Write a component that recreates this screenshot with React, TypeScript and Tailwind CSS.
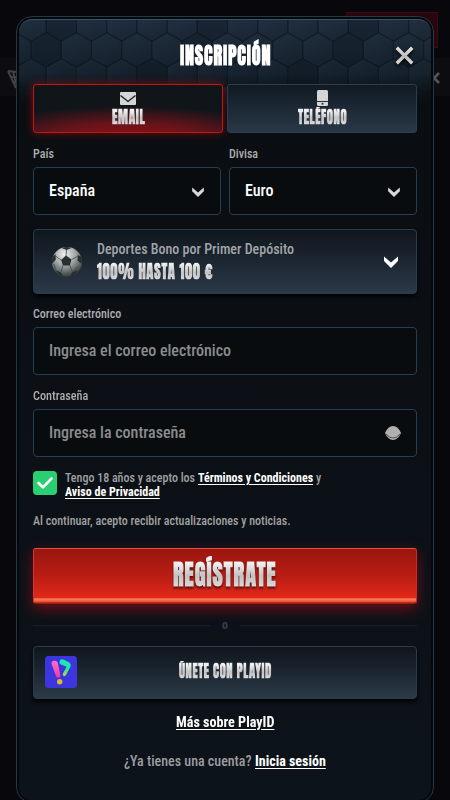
import { useLayoutEffect, useRef, useState } from 'react';
import type { ReactNode } from 'react';

const body = 'font-["Roboto_Condensed","Roboto",sans-serif] [font-stretch:75%] font-medium';
const display = 'font-["Anton","Roboto",sans-serif] [font-stretch:75%] font-black tracking-[0.045em]';
const metal = 'bg-linear-to-b from-[#f0f0f0] from-20% via-[#c2c2c2] via-55% to-[#dadada] to-85% bg-clip-text text-transparent';
const panel =
  'border border-[#2a3c4a] bg-linear-to-b from-[#0f161d] to-[#2b3948] shadow-[0_3px_4px_#020406]';

/** Single line of text condensed horizontally to the given width. */
function Fit({ w, className = '', children }: { w: number; className?: string; children: ReactNode }) {
  const ref = useRef<HTMLSpanElement>(null);
  const [scale, setScale] = useState(1);
  useLayoutEffect(() => {
    if (ref.current) setScale(w / ref.current.offsetWidth);
  }, [w]);
  return (
    <span className="inline-block align-top whitespace-nowrap" style={{ width: w }}>
      <span ref={ref} className={`inline-block origin-left align-top ${className}`} style={{ transform: `scaleX(${scale})` }}>
        {children}
      </span>
    </span>
  );
}

function Chevron({ className = '' }: { className?: string }) {
  return (
    <svg viewBox="0 0 14 12" className={className} fill="currentColor">
      <path d="M0 .5 L7 6.5 L14 .5 V5 L7 12 L0 5Z" />
    </svg>
  );
}

const hexes: [number, number][] = [];
for (let r = 0; r < 4; r++) for (let c = 0; c < 16; c++) hexes.push([(r % 2 ? 26 : 11) + c * 30.2 - 30, 6 + r * 26]);

function HexBackdrop() {
  return (
    <svg className="absolute inset-x-0 top-0 h-[92px] w-full" viewBox="0 0 412 92" preserveAspectRatio="none">
      <defs>
        <linearGradient id="hexBase" x1="0" y1="0" x2="0" y2="1">
          <stop offset="0" stopColor="#1f2e3e" />
          <stop offset="0.65" stopColor="#141f2a" />
          <stop offset="1" stopColor="#0a0f14" />
        </linearGradient>
        <linearGradient id="hexFace" x1="0" y1="0" x2="1" y2="1">
          <stop offset="0" stopColor="#32485c" stopOpacity="0.14" />
          <stop offset="1" stopColor="#05090d" stopOpacity="0.12" />
        </linearGradient>
        <linearGradient id="hexFade" x1="0" y1="0" x2="0" y2="1">
          <stop offset="0.6" stopColor="#0a0d11" stopOpacity="0" />
          <stop offset="1" stopColor="#0a0d11" />
        </linearGradient>
      </defs>
      <rect width="412" height="92" fill="url(#hexBase)" />
      {hexes.map(([x, y], i) => (
        <g key={i} transform={`translate(${x + 1} ${y - 1})`}>
          <path d="M0 -17 L15 -8.5 V8.5 L0 17 L-15 8.5 V-8.5Z" fill={i % 5 === 2 ? '#0b151e55' : 'url(#hexFace)'} stroke="#0b131b" strokeWidth="1.2" strokeOpacity="0.4" />
          <path d="M-14 8 V-8 L0 -16 L14 -8" fill="none" stroke="#40586c" strokeWidth="0.6" strokeOpacity="0.14" />
        </g>
      ))}
      <rect width="412" height="92" fill="url(#hexFade)" />
    </svg>
  );
}

function Football() {
  return (
    <svg viewBox="0 0 32 32" className="h-8 w-8">
      <defs>
        <radialGradient id="ball" cx="0.42" cy="0.25" r="0.8">
          <stop offset="0" stopColor="#f2f2f2" />
          <stop offset="0.45" stopColor="#a2a6a6" />
          <stop offset="1" stopColor="#272d2e" />
        </radialGradient>
      </defs>
      <circle cx="16" cy="16" r="15" fill="url(#ball)" />
      <g fill="#26302f">
        <path d="M15 9.5 L20.5 13.5 L18.8 19.5 H12 L10 14Z" />
        <path d="M10.5 2 Q16 0 20.5 2 L15.5 4Z" />
        <path d="M1.6 11 L4.5 8 L4.8 13.5 L1 18 Q.6 14 1.6 11Z" />
        <path d="M30.4 11 L27 9 L26.5 14.5 L30.5 18 Q31.4 14 30.4 11Z" />
        <path d="M4.5 24 L10 26.5 L12 30.5 Q7 28.5 4.5 24Z" />
        <path d="M27 24 L21 26.5 L19.5 30.7 Q25 29 27 24Z" />
      </g>
      <path d="M15 10 L15.5 4 M20.5 13.5 L27 10 M18.8 19.5 L21.5 26 M12 19.5 L9.8 26 M10 14 L4.5 10 M21.5 26 L27.5 20 M4.5 24 L3 18" stroke="#3d4646" strokeWidth="0.8" />
    </svg>
  );
}

function PlayIdLogo() {
  return (
    <svg viewBox="0 0 32 32" className="h-8 w-8 shrink-0">
      <defs>
        <linearGradient id="pink" x1="0" y1="0" x2="0" y2="1">
          <stop offset="0" stopColor="#ff70cf" />
          <stop offset="1" stopColor="#f5359f" />
        </linearGradient>
        <linearGradient id="green" x1="0" y1="0" x2="0" y2="1">
          <stop offset="0" stopColor="#13e7c6" />
          <stop offset="0.55" stopColor="#2be69b" />
          <stop offset="1" stopColor="#b5e02f" />
        </linearGradient>
      </defs>
      <rect width="32" height="32" rx="3.5" fill="#3d36df" />
      <path d="M6.7 8.2 Q6 5 9 4.7 Q12.3 4.3 13 7.5 L15.3 19.5 Q15.4 21.4 13.5 21.8 Q11.7 22 11 20Z" fill="url(#pink)" />
      <path d="M14.5 5.5 Q15.2 2.6 18.5 3.6 L24 6.3 Q26.5 8 25.3 11 L21 19 Q19.8 20.8 18.4 19.8 Q17.3 19 18 17.5 L21.6 10.7 L16 8.5 Q14 7.3 14.5 5.5Z" fill="url(#green)" />
      <circle cx="14.7" cy="25.7" r="2.7" fill="#e4b928" />
    </svg>
  );
}

function Select({ label, lw, value, vw }: { label: string; lw: number; value: string; vw: number }) {
  return (
    <div className="flex-1">
      <div className="h-[20px] text-[12px] leading-[14px] text-[#acadae]">
        <Fit w={lw}>{label}</Fit>
      </div>
      <div className="flex h-12 items-center justify-between rounded-[4px] border border-[#293d52] bg-[#090c0f] pr-[16px] pl-[15px] text-[16px] leading-5 text-white">
        <Fit w={vw}>{value}</Fit>
        <Chevron className="mt-[2px] h-[10px] w-3 text-[#d8d8d8]" />
      </div>
    </div>
  );
}

function Field({ label, lw, hint, hw, children }: { label: string; lw: number; hint: string; hw: number; children?: ReactNode }) {
  return (
    <div className="h-[68px]">
      <div className="h-[20px] text-[12px] leading-[14px] text-[#acadae]">
        <Fit w={lw}>{label}</Fit>
      </div>
      <div className="flex h-12 items-center justify-between rounded-[4px] border border-[#293d52] bg-[#090c0f] px-[15px] text-[16px] leading-5 text-[#8b8c8d]">
        <Fit w={hw}>{hint}</Fit>
        {children}
      </div>
    </div>
  );
}

export default function App() {
  return (
    <div className={`relative h-[800px] w-[450px] overflow-hidden bg-[#08080c] ${body}`}>
      <div className="absolute top-3 left-[346px] h-9 w-[92px] border border-[#3d0a12] bg-[#25070d]" />
      <div className="absolute top-[58px] left-0 h-[38px] w-full bg-[#0c0c11]" />
      <svg className="absolute top-[69px] left-[7px] h-[20px] w-[12px]" viewBox="0 0 12 20" fill="none" stroke="#424246" strokeWidth="2">
        <path d="M1 2 L10 3 M1 2 L9 19 M3 8 H10 M6 13 H10 M6 2 L9 15" />
      </svg>
      <svg className="absolute top-[72px] left-[431px] h-[12px] w-[9px]" viewBox="0 0 9 12" fill="none" stroke="#55555b" strokeWidth="2.6">
        <path d="M8 1 L3 6 L8 11" />
      </svg>

      <main className="absolute top-4 left-4 h-[787px] w-[418px] rounded-[16px] border border-[#263746] bg-[#05080b] p-[2px]">
        <div className="relative h-full overflow-hidden rounded-[13px] bg-linear-to-b from-[#0a0d11] to-[#0d131a]">
          <HexBackdrop />
          <div className="absolute inset-0 rounded-[13px] border-t border-[#38536a]" />
          <div className="relative px-[14px]">
            <header className="flex h-[65px] items-center justify-between pt-[9px] pr-[3px] pl-[147px]">
              <h1 className={`text-[23px] leading-7 text-white ${display}`}>
                <Fit w={91}>INSCRIPCIÓN</Fit>
              </h1>
              <svg viewBox="0 0 19 19" className="-mt-[1px] h-[19px] w-[19px] drop-shadow-[0_2px_2px_#000]" fill="none" strokeWidth="3.4">
                <defs>
                  <linearGradient id="cross" x1="0" y1="0" x2="0" y2="19" gradientUnits="userSpaceOnUse">
                    <stop stopColor="#eee" />
                    <stop offset="0.55" stopColor="#bababa" />
                    <stop offset="1" stopColor="#e3e3e3" />
                  </linearGradient>
                </defs>
                <path d="M1.8 1.8 L17.2 17.2 M17.2 1.8 L1.8 17.2" stroke="url(#cross)" />
              </svg>
            </header>

            <div className="flex h-[49px] gap-1">
              <button className="flex flex-1 flex-col items-center rounded-[3px] border border-[#b91b14] bg-[radial-gradient(ellipse_85%_70%_at_50%_115%,#981016_0%,#66131a_50%,#10151a_100%)] pt-[7px] shadow-[0_0_9px_#b30a12aa]">
                <svg viewBox="0 0 16 13" className="h-[13px] w-4">
                  <rect width="16" height="13" rx="1" fill="#d5d5d5" />
                  <path d="M.5 3.5 L8 9.5 L15.5 3.5" fill="none" stroke="#15191c" strokeWidth="1.3" />
                </svg>
                <span className={`mt-[2px] text-[17px] leading-5 ${display}`}>
                  <Fit w={33} className={metal}>EMAIL</Fit>
                </span>
              </button>
              <button className="flex flex-1 flex-col items-center rounded-[3px] border border-[#293f50] bg-linear-to-b from-[#111a23] to-[#293848] pt-[5px]">
                <svg viewBox="0 0 11 16" className="h-4 w-[11px]">
                  <rect width="11" height="16" rx="1.5" fill="#d4d4d4" />
                  <path d="M0 11.5 H11" stroke="#26323d" />
                  <circle cx="5.5" cy="13.8" r="1" fill="#26323d" />
                </svg>
                <span className={`mt-[1px] text-[17px] leading-5 ${display}`}>
                  <Fit w={49} className={metal}>TELÉFONO</Fit>
                </span>
              </button>
            </div>

            <div className="mt-[14px] flex gap-2">
              <Select label="País" lw={21} value="España" vw={46} />
              <Select label="Divisa" lw={29} value="Euro" vw={28} />
            </div>

            <div className={`mt-[14px] flex h-[65px] items-center rounded-[4px] pr-[18px] pl-[17px] ${panel}`}>
              <Football />
              <div className="ml-[14px] flex flex-1 flex-col">
                <span className="text-[14px] leading-[18px] text-[#a2a5a8]">
                  <Fit w={197}>Deportes Bono por Primer Depósito</Fit>
                </span>
                <span className={`mt-[1px] text-[19px] leading-[24px] ${display}`}>
                  <Fit w={116} className={metal}>100% HASTA 100 €</Fit>
                </span>
              </div>
              <Chevron className="h-3 w-[14px] text-white" />
            </div>

            <div className="mt-[13px] flex flex-col gap-[14px]">
              <Field label="Correo electrónico" lw={88} hint="Ingresa el correo electrónico" hw={182} />
              <Field label="Contraseña" lw={55} hint="Ingresa la contraseña" hw={137}>
                <svg viewBox="0 0 16 14" className="h-[14px] w-4">
                  <path d="M0 7 Q3 0 8 0 Q13 0 16 7 Q13 14 8 14 Q3 14 0 7Z" fill="#b0b0b0" />
                  <path d="M1 8 Q4 12 8 12 Q12 12 15 8" fill="none" stroke="#33383b" strokeWidth="0.8" />
                </svg>
              </Field>
            </div>

            <div className="mt-[14px] flex h-[42px] gap-2">
              <div className="flex h-6 w-6 items-center justify-center rounded-[4px] bg-[#2bcf73]">
                <svg viewBox="0 0 16 12" className="h-3 w-4" fill="none" stroke="white" strokeWidth="2.7" strokeLinecap="round" strokeLinejoin="round">
                  <path d="M1.6 6 L6 10.4 L14.4 1.6" />
                </svg>
              </div>
              <div className="flex flex-col text-[12px] leading-[14px] text-[#a0a1a2]">
                <div className="flex gap-[3px]">
                  <Fit w={130}>Tengo 18 años y acepto los</Fit>
                  <a className="font-bold text-white"><Fit w={115} className="underline underline-offset-2">Términos y Condiciones</Fit></a>
                  <Fit w={5}>y</Fit>
                </div>
                <a className="font-bold text-white"><Fit w={95} className="underline underline-offset-2">Aviso de Privacidad</Fit></a>
              </div>
            </div>
            <p className="mt-[1px] h-[34px] text-[12px] leading-[14px] text-[#a0a1a2]">
              <Fit w={258}>Al continuar, acepto recibir actualizaciones y noticias.</Fit>
            </p>

            <button className={`flex h-14 w-full items-center justify-center rounded-[3px] border border-t-[#e85148] border-r-[#c42c2e] border-b-[#991a19] border-l-[#d93632] bg-[linear-gradient(#9a160f_0%,#b91d13_50%,#e3281a_91%,#f78653_92%,#ef5b38_97%,#a51c17_100%)] pb-[4px] text-[28px] leading-9 shadow-[0_5px_14px_#ad0d1699] ${display}`}>
              <span className="drop-shadow-[0_2px_1px_#5b0d0d]">
                <Fit w={104} className={metal}>REGÍSTRATE</Fit>
              </span>
            </button>

            <div className="flex h-[42px] items-center gap-3">
              <div className="h-px flex-1 bg-[#171f2a]" />
              <span className="w-[6px] text-center text-[12px] leading-4 font-bold text-[#2d4158]"><Fit w={6}>o</Fit></span>
              <div className="h-px flex-1 bg-[#171f2a]" />
            </div>

            <button className={`flex h-[53px] w-full items-center rounded-[4px] pb-[2px] pl-[11px] ${panel}`}>
              <PlayIdLogo />
              <span className={`-mt-[1px] ml-[102px] text-[17px] leading-5 ${display}`}>
                <Fit w={93} className={metal}>ÚNETE CON PLAYID</Fit>
              </span>
            </button>

            <div className="mt-[14px] flex h-[18px] justify-center text-[14px] leading-[18px] font-bold text-white">
              <Fit w={98} className="underline underline-offset-2">Más sobre PlayID</Fit>
            </div>
            <div className="mt-[21px] flex justify-center gap-[3px] text-[14px] leading-[18px] text-[#9c9ea1]">
              <Fit w={128}>¿Ya tienes una cuenta?</Fit>
              <a className="font-bold text-white"><Fit w={71} className="underline underline-offset-2">Inicia sesión</Fit></a>
            </div>
          </div>
        </div>
      </main>
    </div>
  );
}
